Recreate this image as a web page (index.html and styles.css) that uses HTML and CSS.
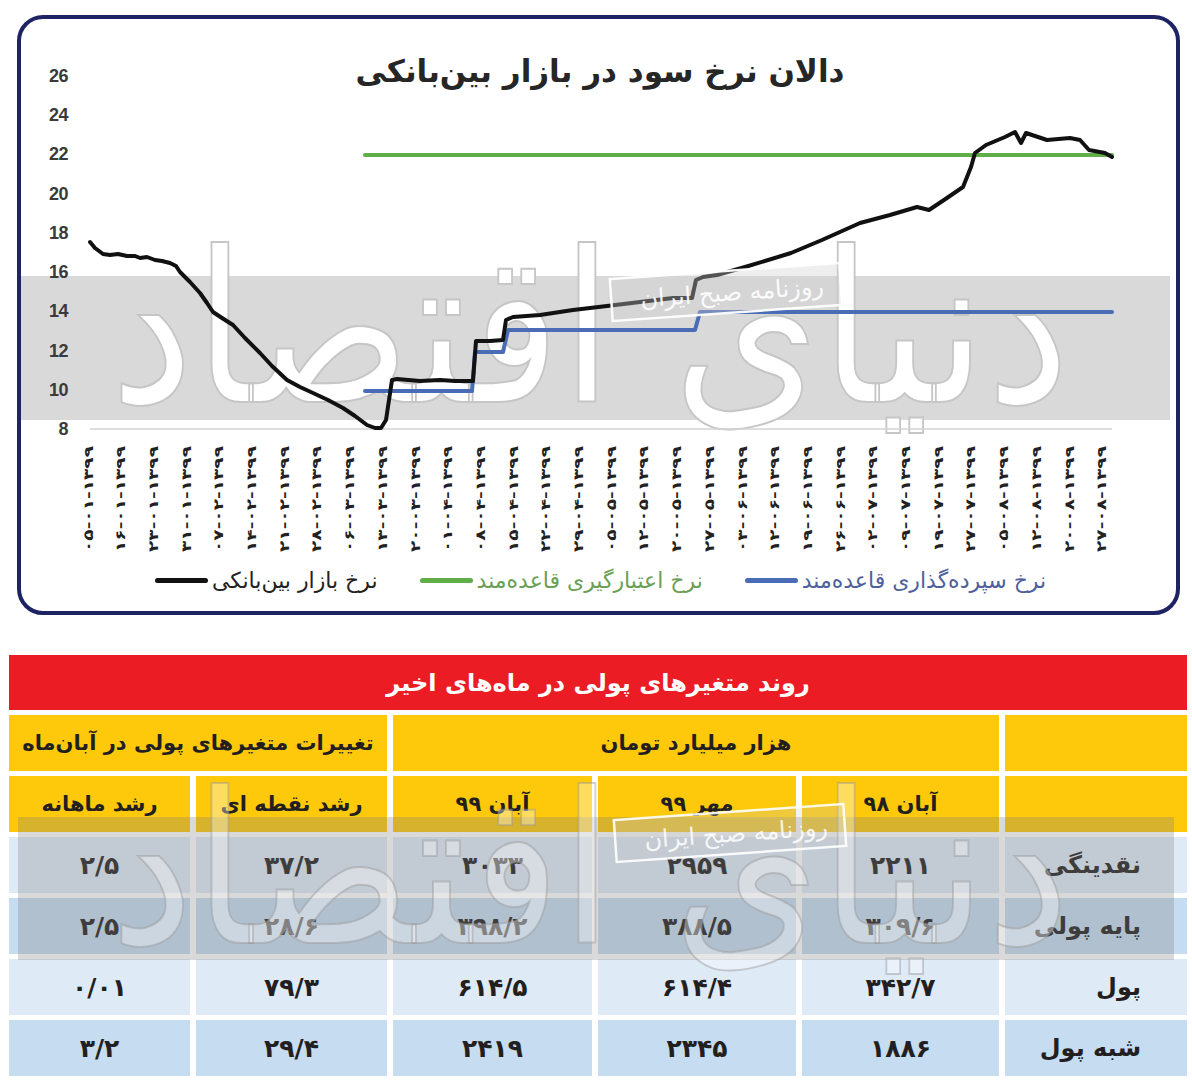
FILE: index.html
```html
<!DOCTYPE html>
<html lang="fa">
<head>
<meta charset="utf-8">
<title>دالان نرخ سود در بازار بین‌بانکی</title>
<link rel="stylesheet" href="styles.css">
</head>
<body>
<main class="page">
  <section class="chart-card">
    <svg class="chart" viewBox="21 19 1155 541" width="1155" height="541" xmlns="http://www.w3.org/2000/svg">
      <g class="wm-under">
        <rect class="wm-band" x="21" y="276" width="1149" height="144"/>
        <text class="wm-callig" x="590" y="402" text-anchor="middle" textLength="960" lengthAdjust="spacingAndGlyphs">دنیای اقتصاد</text>
      </g>
      <text class="chart-title" x="600" y="82" text-anchor="middle">دالان نرخ سود در بازار بین‌بانکی</text>
      <g class="y-labels" text-anchor="end">
        <text x="68" y="82">26</text>
        <text x="68" y="121">24</text>
        <text x="68" y="160">22</text>
        <text x="68" y="200">20</text>
        <text x="68" y="239">18</text>
        <text x="68" y="278">16</text>
        <text x="68" y="317">14</text>
        <text x="68" y="357">12</text>
        <text x="68" y="396">10</text>
        <text x="68" y="435">8</text>
      </g>
      <line class="axis" x1="90" y1="429" x2="1112" y2="429"/>
      <polyline class="ln-green" points="365,155 1112,155"/>
      <polyline class="ln-blue" points="365,391 472,391 475,352 503,352 508,330 695,330 700,312 1112,312"/>
      <polyline class="ln-black" points="90,242 95,248 103,254 110,255 118,254 127,256 135,256 140,258 147,257 155,260 162,261 170,263 176,266 180,272 190,282 200,293 207,303 213,312 222,318 233,325 245,338 260,353 272,366 287,380 300,387 313,393 328,400 343,408 355,416 367,425 375,428 381,428 386,420 392,380 397,379 420,381 440,380 455,381 473,381 476,341 490,341 503,340 506,320 513,317 540,315 573,310 607,306 640,302 673,298 692,298 696,280 703,277 717,275 745,267 791,253 822,240 860,223 890,215 917,207 929,210 944,200 963,187 971,167 975,153 986,145 1005,137 1015,132 1021,143 1026,133 1047,140 1070,138 1080,140 1089,150 1105,153 1112,157"/>
      <g class="x-labels">
        <text x="88.0" y="552" transform="rotate(-90 88.0 552)" textLength="106" lengthAdjust="spacingAndGlyphs">۰۵-۰۱-۱۳۹۹</text>
        <text x="120.7" y="552" transform="rotate(-90 120.7 552)" textLength="106" lengthAdjust="spacingAndGlyphs">۱۶-۰۱-۱۳۹۹</text>
        <text x="153.4" y="552" transform="rotate(-90 153.4 552)" textLength="106" lengthAdjust="spacingAndGlyphs">۲۳-۰۱-۱۳۹۹</text>
        <text x="186.1" y="552" transform="rotate(-90 186.1 552)" textLength="106" lengthAdjust="spacingAndGlyphs">۳۱-۰۱-۱۳۹۹</text>
        <text x="218.8" y="552" transform="rotate(-90 218.8 552)" textLength="106" lengthAdjust="spacingAndGlyphs">۰۷-۰۲-۱۳۹۹</text>
        <text x="251.5" y="552" transform="rotate(-90 251.5 552)" textLength="106" lengthAdjust="spacingAndGlyphs">۱۴-۰۲-۱۳۹۹</text>
        <text x="284.2" y="552" transform="rotate(-90 284.2 552)" textLength="106" lengthAdjust="spacingAndGlyphs">۲۱-۰۲-۱۳۹۹</text>
        <text x="316.9" y="552" transform="rotate(-90 316.9 552)" textLength="106" lengthAdjust="spacingAndGlyphs">۲۸-۰۲-۱۳۹۹</text>
        <text x="349.6" y="552" transform="rotate(-90 349.6 552)" textLength="106" lengthAdjust="spacingAndGlyphs">۰۶-۰۳-۱۳۹۹</text>
        <text x="382.3" y="552" transform="rotate(-90 382.3 552)" textLength="106" lengthAdjust="spacingAndGlyphs">۱۳-۰۳-۱۳۹۹</text>
        <text x="415.0" y="552" transform="rotate(-90 415.0 552)" textLength="106" lengthAdjust="spacingAndGlyphs">۲۰-۰۳-۱۳۹۹</text>
        <text x="447.7" y="552" transform="rotate(-90 447.7 552)" textLength="106" lengthAdjust="spacingAndGlyphs">۰۱-۰۴-۱۳۹۹</text>
        <text x="480.4" y="552" transform="rotate(-90 480.4 552)" textLength="106" lengthAdjust="spacingAndGlyphs">۰۸-۰۴-۱۳۹۹</text>
        <text x="513.1" y="552" transform="rotate(-90 513.1 552)" textLength="106" lengthAdjust="spacingAndGlyphs">۱۵-۰۴-۱۳۹۹</text>
        <text x="545.8" y="552" transform="rotate(-90 545.8 552)" textLength="106" lengthAdjust="spacingAndGlyphs">۲۲-۰۴-۱۳۹۹</text>
        <text x="578.5" y="552" transform="rotate(-90 578.5 552)" textLength="106" lengthAdjust="spacingAndGlyphs">۲۹-۰۴-۱۳۹۹</text>
        <text x="611.2" y="552" transform="rotate(-90 611.2 552)" textLength="106" lengthAdjust="spacingAndGlyphs">۰۵-۰۵-۱۳۹۹</text>
        <text x="643.9" y="552" transform="rotate(-90 643.9 552)" textLength="106" lengthAdjust="spacingAndGlyphs">۱۲-۰۵-۱۳۹۹</text>
        <text x="676.6" y="552" transform="rotate(-90 676.6 552)" textLength="106" lengthAdjust="spacingAndGlyphs">۲۰-۰۵-۱۳۹۹</text>
        <text x="709.3" y="552" transform="rotate(-90 709.3 552)" textLength="106" lengthAdjust="spacingAndGlyphs">۲۷-۰۵-۱۳۹۹</text>
        <text x="742.0" y="552" transform="rotate(-90 742.0 552)" textLength="106" lengthAdjust="spacingAndGlyphs">۰۳-۰۶-۱۳۹۹</text>
        <text x="774.7" y="552" transform="rotate(-90 774.7 552)" textLength="106" lengthAdjust="spacingAndGlyphs">۱۲-۰۶-۱۳۹۹</text>
        <text x="807.4" y="552" transform="rotate(-90 807.4 552)" textLength="106" lengthAdjust="spacingAndGlyphs">۱۹-۰۶-۱۳۹۹</text>
        <text x="840.1" y="552" transform="rotate(-90 840.1 552)" textLength="106" lengthAdjust="spacingAndGlyphs">۲۶-۰۶-۱۳۹۹</text>
        <text x="872.8" y="552" transform="rotate(-90 872.8 552)" textLength="106" lengthAdjust="spacingAndGlyphs">۰۲-۰۷-۱۳۹۹</text>
        <text x="905.5" y="552" transform="rotate(-90 905.5 552)" textLength="106" lengthAdjust="spacingAndGlyphs">۰۹-۰۷-۱۳۹۹</text>
        <text x="938.2" y="552" transform="rotate(-90 938.2 552)" textLength="106" lengthAdjust="spacingAndGlyphs">۱۹-۰۷-۱۳۹۹</text>
        <text x="970.9" y="552" transform="rotate(-90 970.9 552)" textLength="106" lengthAdjust="spacingAndGlyphs">۲۷-۰۷-۱۳۹۹</text>
        <text x="1003.6" y="552" transform="rotate(-90 1003.6 552)" textLength="106" lengthAdjust="spacingAndGlyphs">۰۵-۰۸-۱۳۹۹</text>
        <text x="1036.3" y="552" transform="rotate(-90 1036.3 552)" textLength="106" lengthAdjust="spacingAndGlyphs">۱۲-۰۸-۱۳۹۹</text>
        <text x="1069.0" y="552" transform="rotate(-90 1069.0 552)" textLength="106" lengthAdjust="spacingAndGlyphs">۲۰-۰۸-۱۳۹۹</text>
        <text x="1101.7" y="552" transform="rotate(-90 1101.7 552)" textLength="106" lengthAdjust="spacingAndGlyphs">۲۷-۰۸-۱۳۹۹</text>
      </g>
      <g class="wm-box" transform="translate(726 292) rotate(-4)">
        <rect x="-115" y="-21" width="230" height="42"/>
        <text x="6" y="9" text-anchor="middle">روزنامه صبح ایران</text>
      </g>
    </svg>
    <div class="legend">
      <div class="legend-item black"><span class="swatch"></span><span class="ltext">نرخ بازار بین‌بانکی</span></div>
      <div class="legend-item green"><span class="swatch"></span><span class="ltext">نرخ اعتبارگیری قاعده‌مند</span></div>
      <div class="legend-item blue"><span class="swatch"></span><span class="ltext">نرخ سپرده‌گذاری قاعده‌مند</span></div>
    </div>
  </section>

  <section class="table-wrap">
    <div class="monetary" dir="rtl">
      <div class="t-title">روند متغیرهای پولی در ماه‌های اخیر</div>

      <div class="hc"></div>
      <div class="hc span3">هزار میلیارد تومان</div>
      <div class="hc span2 tight">تغییرات متغیرهای پولی در آبان‌ماه</div>

      <div class="hc"></div>
      <div class="hc">آبان ۹۸</div>
      <div class="hc">مهر ۹۹</div>
      <div class="hc">آبان ۹۹</div>
      <div class="hc">رشد نقطه ای</div>
      <div class="hc">رشد ماهانه</div>

      <div class="dc lbl light">نقدینگی</div>
      <div class="dc light">۲۲۱۱</div>
      <div class="dc light">۲۹۵۹</div>
      <div class="dc light">۳۰۳۳</div>
      <div class="dc light">۳۷/۲</div>
      <div class="dc light">۲/۵</div>

      <div class="dc lbl dark">پایه پولی</div>
      <div class="dc dark">۳۰۹/۶</div>
      <div class="dc dark">۳۸۸/۵</div>
      <div class="dc dark">۳۹۸/۲</div>
      <div class="dc dark">۲۸/۶</div>
      <div class="dc dark">۲/۵</div>

      <div class="dc lbl light">پول</div>
      <div class="dc light">۳۴۲/۷</div>
      <div class="dc light">۶۱۴/۴</div>
      <div class="dc light">۶۱۴/۵</div>
      <div class="dc light">۷۹/۳</div>
      <div class="dc light">۰/۰۱</div>

      <div class="dc lbl dark">شبه پول</div>
      <div class="dc dark">۱۸۸۶</div>
      <div class="dc dark">۲۳۴۵</div>
      <div class="dc dark">۲۴۱۹</div>
      <div class="dc dark">۲۹/۴</div>
      <div class="dc dark">۳/۲</div>
    </div>
    <div class="wm-over" aria-hidden="true">
      <svg viewBox="9 655 1178 421" width="1178" height="421" xmlns="http://www.w3.org/2000/svg">
        <rect class="wm-band-t" x="18" y="817" width="1156" height="143"/>
        <text class="wm-callig-t" x="590" y="943" text-anchor="middle" textLength="960" lengthAdjust="spacingAndGlyphs">دنیای اقتصاد</text>
        <g class="wm-box-t" transform="translate(730 833) rotate(-4)">
          <rect x="-115" y="-21" width="230" height="42"/>
          <text x="6" y="9" text-anchor="middle">روزنامه صبح ایران</text>
        </g>
      </svg>
    </div>
  </section>
</main>
</body>
</html>
```

FILE: styles.css
```css
* { box-sizing: border-box; }
html, body { margin: 0; padding: 0; background: #ffffff; }
body { width: 1192px; font-family: "DejaVu Sans", sans-serif; color: #231f20; }

.page { padding-top: 15px; }

/* ---------- chart card ---------- */
.chart-card {
  margin-left: 17px;
  width: 1163px;
  height: 600px;
  border: 4px solid #1d2363;
  border-radius: 26px;
  display: flex;
  flex-direction: column;
  overflow: hidden;
  background: #fff;
}
.chart { display: block; width: 1155px; height: 541px; }

.wm-band { fill: #d9d9d9; }
.wm-callig {
  font: 400 210px "DejaVu Sans", sans-serif;
  fill: #ffffff;
  stroke: #c6c6c6;
  stroke-width: 2;
}
.chart-title { font: 700 31px "DejaVu Sans", sans-serif; fill: #262626; }
.y-labels text { font: 700 18px "Liberation Sans", Arial, sans-serif; fill: #3a3a3a; letter-spacing: -0.5px; }
.axis { stroke: #d3d3d3; stroke-width: 1.5; }
.ln-green, .ln-blue, .ln-black { fill: none; stroke-linejoin: round; stroke-linecap: round; }
.ln-green { stroke: #5fae48; stroke-width: 4; }
.ln-blue { stroke: #4a6bb5; stroke-width: 4; }
.ln-black { stroke: #111111; stroke-width: 4; }
.x-labels text { font: 700 13px "DejaVu Sans", sans-serif; fill: #222; dominant-baseline: central; }

.wm-box rect { fill: rgba(205, 205, 205, 0.35); stroke: rgba(255, 255, 255, 0.95); stroke-width: 2.5; }
.wm-box text { font: 400 24px "DejaVu Sans", sans-serif; fill: rgba(255, 255, 255, 0.92); }

.legend {
  display: flex;
  align-items: center;
  height: 40px;
  padding-left: 134px;
  gap: 42px;
  font: 400 22px "DejaVu Sans", sans-serif;
  white-space: nowrap;
}
.legend-item { display: flex; align-items: center; gap: 4px; }
.swatch { display: block; width: 53px; height: 5px; border-radius: 3px; }
.legend-item.black .swatch { background: #111; }
.legend-item.black .ltext { color: #222; }
.legend-item.green .swatch { background: #5fae48; }
.legend-item.green .ltext { color: #6a9f55; }
.legend-item.blue .swatch { background: #4a6bb5; }
.legend-item.blue .ltext { color: #4f5f9c; }

/* ---------- table ---------- */
.table-wrap { position: relative; margin: 40px 0 0 9px; width: 1178px; }
.monetary {
  display: grid;
  grid-template-columns: 182px 197px 198px 199px 191px 181px;
  grid-template-rows: 55px repeat(6, 56px);
  gap: 5px 6px;
}
.t-title {
  grid-column: 1 / -1;
  background: #ec1c24;
  color: #fff;
  font: 700 24px "DejaVu Sans", sans-serif;
  display: flex; align-items: center; justify-content: center;
}
.hc, .dc {
  display: flex; align-items: center; justify-content: center;
  font: 700 25px "DejaVu Sans", sans-serif;
  color: #231f20;
  white-space: nowrap;
}
.hc { background: #fdc90a; font-size: 21px; }
.hc.tight { font-size: 21px; letter-spacing: -0.6px; }
.span3 { grid-column: span 3; }
.span2 { grid-column: span 2; }
.dc.light { background: #dfeaf7; }
.dc.dark { background: #c6dcf1; }
.dc.lbl { justify-content: flex-start; padding-right: 46px; font-size: 24px; }

.wm-over { position: absolute; left: 0; top: 0; width: 1178px; height: 421px; pointer-events: none; }
.wm-over svg { display: block; }
.wm-band-t { fill: rgba(128, 128, 128, 0.3); }
.wm-callig-t {
  font: 400 210px "DejaVu Sans", sans-serif;
  fill: rgba(255, 255, 255, 0.35);
  stroke: rgba(150, 150, 150, 0.45);
  stroke-width: 2;
}
.wm-box-t rect { fill: rgba(205, 205, 205, 0.25); stroke: rgba(255, 255, 255, 0.9); stroke-width: 2.5; }
.wm-box-t text { font: 400 24px "DejaVu Sans", sans-serif; fill: rgba(255, 255, 255, 0.85); }
```
